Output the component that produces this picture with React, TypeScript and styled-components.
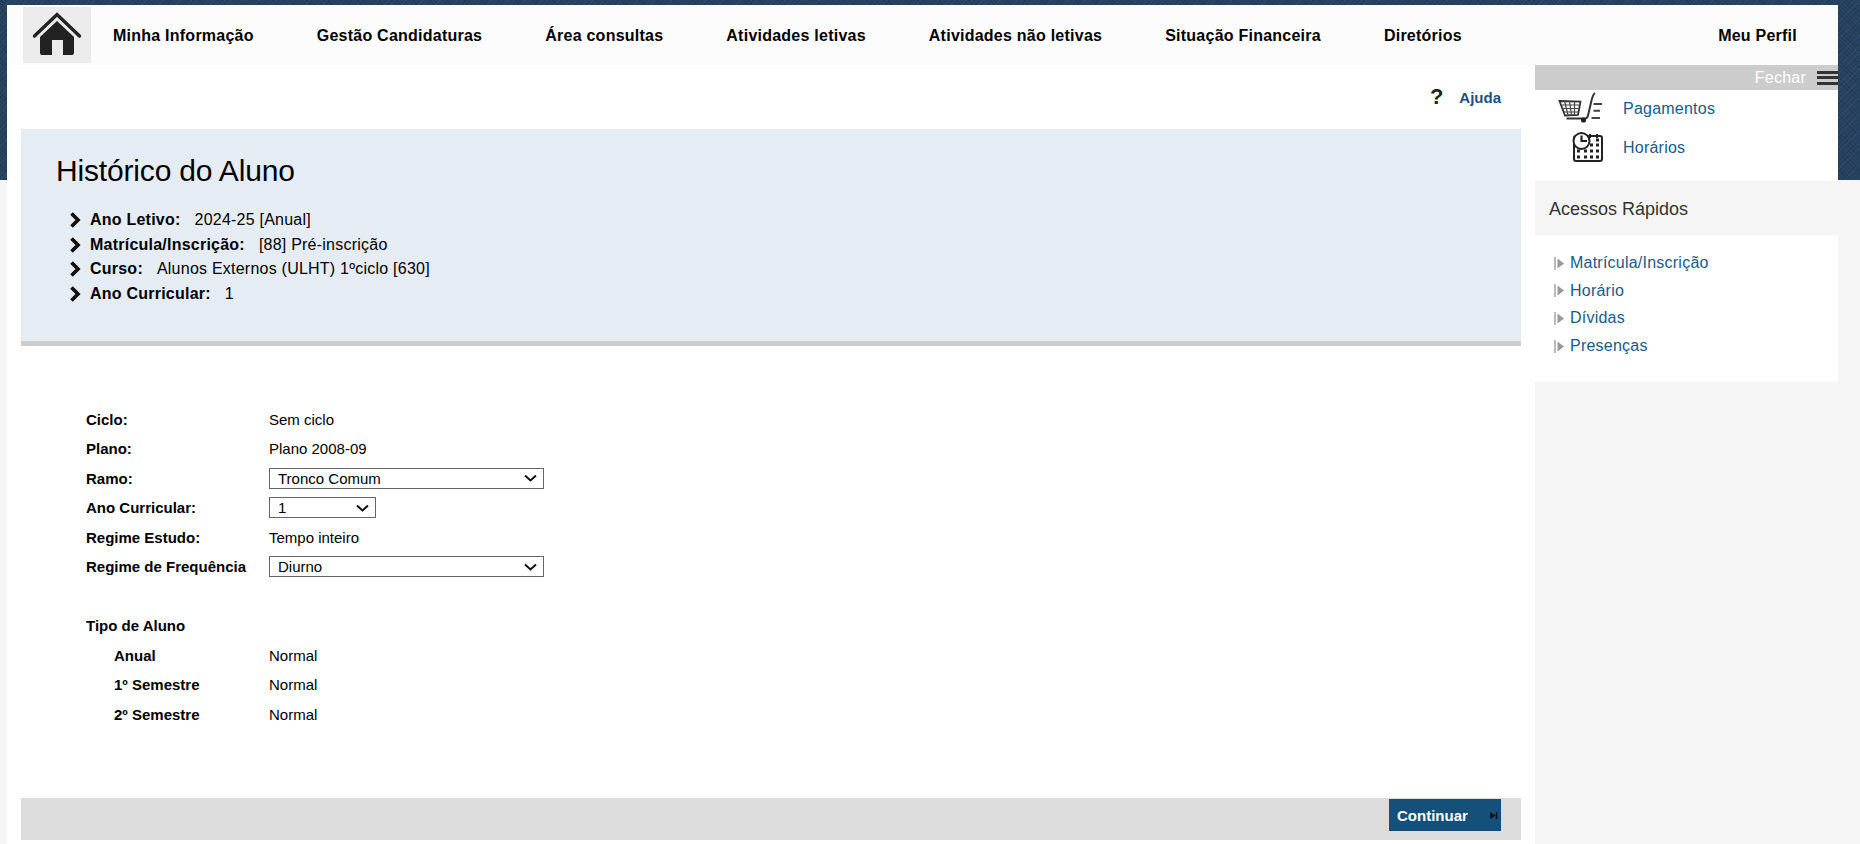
import * as React from 'react';
import styled, { createGlobalStyle } from 'styled-components';

const GlobalStyle = createGlobalStyle`
    html, body {
        margin: 0;
        padding: 0;
        height: 100%;
    }
    body {
        font-family: "Liberation Sans", Arial, sans-serif;
        color: #000;
        background:
            linear-gradient(#f5f5f5, #f5f5f5) 0 180px no-repeat,
            repeating-linear-gradient(45deg, rgba(0, 0, 0, 0.1) 0 1px, transparent 1px 3px),
            repeating-linear-gradient(-45deg, rgba(255, 255, 255, 0.04) 0 1px, transparent 1px 4px),
            #254360;
        overflow: hidden;
    }
`;

const menuItems = [
    'Minha Informação',
    'Gestão Candidaturas',
    'Área consultas',
    'Atividades letivas',
    'Atividades não letivas',
    'Situação Financeira',
    'Diretórios',
];

const summary = [
    { label: 'Ano Letivo:', value: '2024-25 [Anual]' },
    { label: 'Matrícula/Inscrição:', value: '[88] Pré-inscrição' },
    { label: 'Curso:', value: 'Alunos Externos (ULHT) 1ºciclo [630]' },
    { label: 'Ano Curricular:', value: '1' },
];

const quickLinks = ['Matrícula/Inscrição', 'Horário', 'Dívidas', 'Presenças'];

const Page = styled.div`
    width: 1860px;
    height: 844px;
    padding: 5px 22px 0 7px;
    box-sizing: border-box;
    overflow: hidden;
`;

const TopBar = styled.nav`
    height: 60px;
    background: #fcfcfc;
    display: flex;
    align-items: center;
    padding-left: 16px;
`;

const HomeBox = styled.a`
    width: 68px;
    height: 56px;
    background: #ebebeb;
    display: flex;
    align-items: center;
    justify-content: center;
    margin-right: 22px;
`;

const MenuLink = styled.a<{ $push?: boolean }>`
    font-size: 16px;
    font-weight: bold;
    letter-spacing: 0.24px;
    margin-right: ${p => (p.$push ? '41px' : '63px')};
    margin-left: ${p => (p.$push ? 'auto' : '0')};
    padding-top: 1px;
    white-space: nowrap;
`;

const Columns = styled.div`
    display: flex;
    height: 779px;
`;

const Main = styled.main`
    width: 1528px;
    background: #fff;
    padding: 0 14px;
    box-sizing: border-box;
`;

const HelpRow = styled.div`
    height: 64px;
    display: flex;
    align-items: center;
    justify-content: flex-end;
    padding-right: 20px;
    box-sizing: border-box;
`;

const HelpMark = styled.span`
    font-size: 22px;
    font-weight: bold;
    color: #222;
    margin-right: 16px;
`;

const HelpLink = styled.a`
    font-size: 15px;
    font-weight: bold;
    color: #1a5080;
`;

const InfoBox = styled.section`
    height: 217px;
    background: #e6ecf4;
    border-bottom: 5px solid #ccc;
    padding: 24px 35px 0;
    box-sizing: border-box;
`;

const Title = styled.h1`
    font-size: 30px;
    font-weight: normal;
    letter-spacing: -0.17px;
    line-height: 36px;
    margin: 0 0 19px;
`;

const SummaryRow = styled.div`
    display: flex;
    align-items: center;
    height: 24.6px;
    padding-left: 13px;
    font-size: 16px;
    letter-spacing: 0.23px;
`;

const Chevron = styled.svg`
    width: 12px;
    height: 18px;
    margin-right: 9px;
    flex: none;
`;

const SummaryLabel = styled.b`
    margin-right: 14px;
`;

const FormArea = styled.div`
    padding: 58.5px 0 0 65px;
    height: 452px;
    box-sizing: border-box;
`;

const FormRow = styled.div`
    display: grid;
    grid-template-columns: 183px 1fr;
    align-items: center;
    height: 29.5px;
    font-size: 15px;
`;

const FormLabel = styled.div<{ $indent?: boolean }>`
    font-weight: bold;
    padding-left: ${p => (p.$indent ? '28px' : '0')};
`;

const SelectBox = styled.div<{ $small?: boolean }>`
    width: ${p => (p.$small ? '107px' : '275px')};
    height: 21px;
    border: 1px solid #666;
    box-sizing: border-box;
    display: flex;
    align-items: center;
    justify-content: space-between;
    padding: 0 6px 0 8px;
    background: #fff;
`;

const Spacer = styled.div`
    height: 29.5px;
`;

const ActionBar = styled.div`
    height: 42px;
    background: #dcdcdc;
    display: flex;
    justify-content: flex-end;
    padding: 1px 20px 0 0;
    box-sizing: border-box;
`;

const ContinueButton = styled.a`
    width: 112px;
    height: 32px;
    background: #14507a;
    color: #fff;
    font-size: 15px;
    font-weight: bold;
    display: flex;
    align-items: center;
    justify-content: space-between;
    padding: 0 3px 0 8px;
    box-sizing: border-box;
`;

const Side = styled.aside`
    width: 303px;
`;

const CloseBar = styled.div`
    height: 25px;
    background: #ccc;
    color: #fff;
    font-size: 16px;
    letter-spacing: 0.23px;
    display: flex;
    align-items: center;
    justify-content: flex-end;
`;

const Burger = styled.span`
    width: 21px;
    height: 14px;
    margin-left: 11px;
    background: repeating-linear-gradient(#333 0 3px, #ccc 3px 5.5px);
`;

const ShortcutPanel = styled.div`
    height: 91px;
    background: #fff;
`;

const Shortcut = styled.a`
    display: grid;
    grid-template-columns: 88px 1fr;
    align-items: center;
    height: 39px;
    font-size: 16px;
    letter-spacing: 0.23px;
    color: #1a5a8a;
    position: relative;
    top: -1px;
    svg {
        justify-self: end;
        margin-right: 19px;
    }
`;

const PanelHead = styled.div`
    height: 54px;
    background: #f5f5f5;
    display: flex;
    align-items: center;
    padding: 2px 0 0 14px;
    box-sizing: border-box;
    font-size: 18px;
    color: #333;
`;

const LinksPanel = styled.div`
    height: 147px;
    background: #fff;
    padding: 14.500px 0 0 19px;
    box-sizing: border-box;
`;

const QuickLink = styled.a`
    display: flex;
    align-items: center;
    height: 27.6px;
    font-size: 16px;
    letter-spacing: 0.23px;
    color: #1a5a8a;
`;

const QuickArrow = styled.svg`
    width: 11px;
    height: 13px;
    margin-right: 5px;
    flex: none;
`;

const ChevronIcon = () => (
    <Chevron viewBox="0 0 12 18">
        <path d="M2.5 2.5L9 9l-6.5 6.5" fill="none" stroke="#111" strokeWidth="3.7" />
    </Chevron>
);

const SelectArrow = () => (
    <svg width="13" height="8" viewBox="0 0 13 8">
        <path d="M1 1.5l5.5 5 5.5-5" fill="none" stroke="#111" strokeWidth="2" />
    </svg>
);

const HomeIcon = () => (
    <svg width="50" height="46" viewBox="0 0 50 46">
        <path d="M2.5 24L25 2.5 47.5 24" fill="none" stroke="#222" strokeWidth="3.4" strokeLinecap="round" />
        <path d="M25 9L8 25v16a2 2 0 0 0 2 2h10V28h11v15h9a2 2 0 0 0 2-2V25z" fill="#222" />
    </svg>
);

const CartIcon = () => (
    <svg width="46" height="36" viewBox="0 0 46 36">
        <path d="M1.5 10l21 .5L20 24l-13 .5z" fill="#fff" stroke="#333" strokeWidth="1.8" />
        <path d="M3.500 14h18M5 17.500h16M6 21h14M6.500 10l3.500 14M11.500 10.500l2 13.500M16.500 10.500v13.500" stroke="#444" strokeWidth="1.2" />
        <path d="M8.500 27.500H27c2 0 2.500-1 3-3l3.500-15c1-4 2-6.500 3.500-7.500" fill="none" stroke="#333" strokeWidth="2" />
        <circle cx="25.500" cy="29" r="2.600" fill="#222" />
        <path d="M35.500 13h8.500M35.500 19.700H42M33.500 27H42" stroke="#444" strokeWidth="2" />
    </svg>
);

const ScheduleIcon = () => (
    <svg width="32" height="32" viewBox="0 0 32 32">
        <rect x="2" y="4" width="28" height="25" rx="2" fill="#fff" stroke="#222" strokeWidth="2" />
        <path d="M18 2v4M25 2v4" stroke="#222" strokeWidth="2" />
        <path d="M5 19h3M12 19h3M18 19h3M24 19h3M5 25h3M12 25h3M18 25h3M24 25h3M18 13h3M24 13h3M24 8h3" stroke="#222" strokeWidth="3" />
        <circle cx="9.500" cy="9" r="8" fill="#fff" stroke="#222" strokeWidth="2" />
        <path d="M9.500 3.500V9H15" fill="none" stroke="#222" strokeWidth="2.200" />
    </svg>
);

const ArrowMark = () => (
    <QuickArrow viewBox="0 0 11 13">
        <path d="M1 0v13" stroke="#bbb" strokeWidth="2" />
        <path d="M3.500 1.500L10 6.500l-6.500 5z" fill="#999" />
    </QuickArrow>
);

const SkipMark = () => (
    <svg width="8" height="7" viewBox="0 0 8 7">
        <path d="M0 0l5.500 3.500L0 7z" fill="#111" />
        <path d="M6.500 0v7" stroke="#111" strokeWidth="1.600" />
    </svg>
);

export default function App() {
    return (
        <Page>
            <GlobalStyle />
            <TopBar>
                <HomeBox>
                    <HomeIcon />
                </HomeBox>
                {menuItems.map(item => (
                    <MenuLink key={item}>{item}</MenuLink>
                ))}
                <MenuLink $push={true}>Meu Perfil</MenuLink>
            </TopBar>
            <Columns>
                <Main>
                    <HelpRow>
                        <HelpMark>?</HelpMark>
                        <HelpLink>Ajuda</HelpLink>
                    </HelpRow>
                    <InfoBox>
                        <Title>Histórico do Aluno</Title>
                        {summary.map(row => (
                            <SummaryRow key={row.label}>
                                <ChevronIcon />
                                <SummaryLabel>{row.label}</SummaryLabel>
                                {row.value}
                            </SummaryRow>
                        ))}
                    </InfoBox>
                    <FormArea>
                        <FormRow><FormLabel>Ciclo:</FormLabel><div>Sem ciclo</div></FormRow>
                        <FormRow><FormLabel>Plano:</FormLabel><div>Plano 2008-09</div></FormRow>
                        <FormRow>
                            <FormLabel>Ramo:</FormLabel>
                            <SelectBox>Tronco Comum<SelectArrow /></SelectBox>
                        </FormRow>
                        <FormRow>
                            <FormLabel>Ano Curricular:</FormLabel>
                            <SelectBox $small={true}>1<SelectArrow /></SelectBox>
                        </FormRow>
                        <FormRow><FormLabel>Regime Estudo:</FormLabel><div>Tempo inteiro</div></FormRow>
                        <FormRow>
                            <FormLabel>Regime de Frequência</FormLabel>
                            <SelectBox>Diurno<SelectArrow /></SelectBox>
                        </FormRow>
                        <Spacer />
                        <FormRow><FormLabel>Tipo de Aluno</FormLabel></FormRow>
                        <FormRow><FormLabel $indent={true}>Anual</FormLabel><div>Normal</div></FormRow>
                        <FormRow><FormLabel $indent={true}>1º Semestre</FormLabel><div>Normal</div></FormRow>
                        <FormRow><FormLabel $indent={true}>2º Semestre</FormLabel><div>Normal</div></FormRow>
                    </FormArea>
                    <ActionBar>
                        <ContinueButton>Continuar<SkipMark /></ContinueButton>
                    </ActionBar>
                </Main>
                <Side>
                    <CloseBar>Fechar<Burger /></CloseBar>
                    <ShortcutPanel>
                        <Shortcut><CartIcon />Pagamentos</Shortcut>
                        <Shortcut><ScheduleIcon />Horários</Shortcut>
                    </ShortcutPanel>
                    <PanelHead>Acessos Rápidos</PanelHead>
                    <LinksPanel>
                        {quickLinks.map(link => (
                            <QuickLink key={link}><ArrowMark />{link}</QuickLink>
                        ))}
                    </LinksPanel>
                </Side>
            </Columns>
        </Page>
    );
}
